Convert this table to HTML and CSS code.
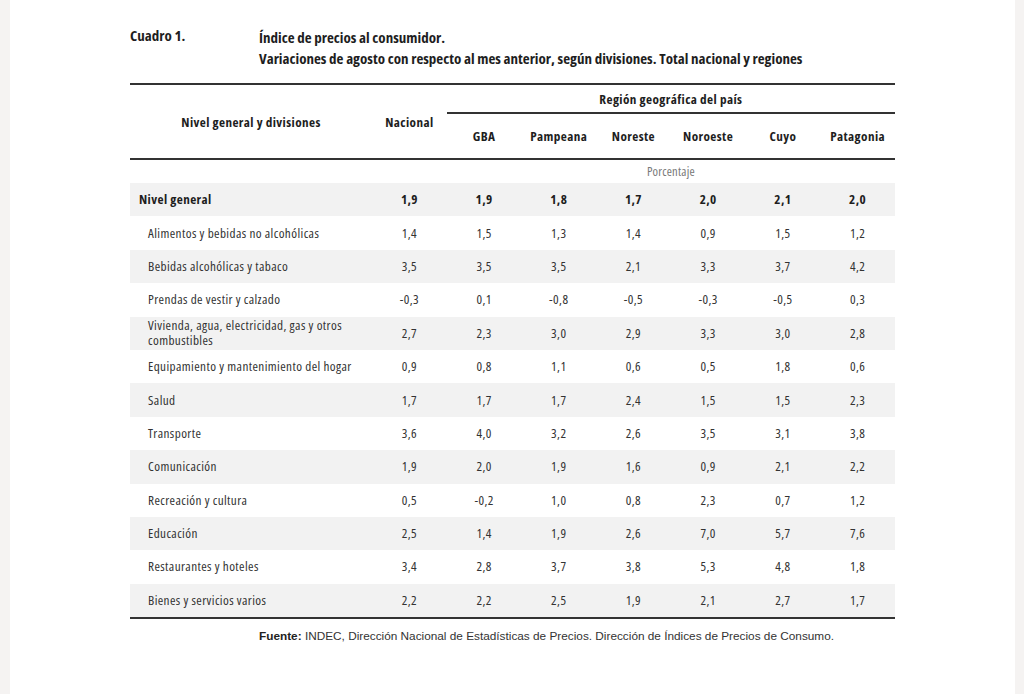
FILE: index.html
```html
<!DOCTYPE html>
<html lang="es">
<head>
<meta charset="utf-8">
<title>Cuadro 1</title>
<link rel="stylesheet" href="styles.css">
</head>
<body>
<div class="page">
  <div class="title">
    <div class="label">Cuadro 1.</div>
    <div class="heading">
      <div>Índice de precios al consumidor.</div>
      <div>Variaciones de agosto con respecto al mes anterior, según divisiones. Total nacional y regiones</div>
    </div>
  </div>
  <table class="data">
    <colgroup>
      <col class="c-name">
      <col class="c-num"><col class="c-num"><col class="c-num"><col class="c-num"><col class="c-num"><col class="c-num"><col class="c-num">
    </colgroup>
    <thead>
      <tr class="h1">
        <th rowspan="2" class="h-name">Nivel general y divisiones</th>
        <th rowspan="2" class="h-nac">Nacional</th>
        <th colspan="6" class="h-region">Región geográfica del país</th>
      </tr>
      <tr class="h2">
        <th>GBA</th><th>Pampeana</th><th>Noreste</th><th>Noroeste</th><th>Cuyo</th><th>Patagonia</th>
      </tr>
    </thead>
    <tbody>
      <tr class="unit"><td></td><td></td><td colspan="6" class="pct">Porcentaje</td></tr>
      <tr class="row shade total"><td class="name">Nivel general</td><td>1,9</td><td>1,9</td><td>1,8</td><td>1,7</td><td>2,0</td><td>2,1</td><td>2,0</td></tr>
      <tr class="row"><td class="name sub">Alimentos y bebidas no alcohólicas</td><td>1,4</td><td>1,5</td><td>1,3</td><td>1,4</td><td>0,9</td><td>1,5</td><td>1,2</td></tr>
      <tr class="row shade"><td class="name sub">Bebidas alcohólicas y tabaco</td><td>3,5</td><td>3,5</td><td>3,5</td><td>2,1</td><td>3,3</td><td>3,7</td><td>4,2</td></tr>
      <tr class="row"><td class="name sub">Prendas de vestir y calzado</td><td>-0,3</td><td>0,1</td><td>-0,8</td><td>-0,5</td><td>-0,3</td><td>-0,5</td><td>0,3</td></tr>
      <tr class="row shade"><td class="name sub">Vivienda, agua, electricidad, gas y otros combustibles</td><td>2,7</td><td>2,3</td><td>3,0</td><td>2,9</td><td>3,3</td><td>3,0</td><td>2,8</td></tr>
      <tr class="row"><td class="name sub">Equipamiento y mantenimiento del hogar</td><td>0,9</td><td>0,8</td><td>1,1</td><td>0,6</td><td>0,5</td><td>1,8</td><td>0,6</td></tr>
      <tr class="row shade"><td class="name sub">Salud</td><td>1,7</td><td>1,7</td><td>1,7</td><td>2,4</td><td>1,5</td><td>1,5</td><td>2,3</td></tr>
      <tr class="row"><td class="name sub">Transporte</td><td>3,6</td><td>4,0</td><td>3,2</td><td>2,6</td><td>3,5</td><td>3,1</td><td>3,8</td></tr>
      <tr class="row shade"><td class="name sub">Comunicación</td><td>1,9</td><td>2,0</td><td>1,9</td><td>1,6</td><td>0,9</td><td>2,1</td><td>2,2</td></tr>
      <tr class="row"><td class="name sub">Recreación y cultura</td><td>0,5</td><td>-0,2</td><td>1,0</td><td>0,8</td><td>2,3</td><td>0,7</td><td>1,2</td></tr>
      <tr class="row shade"><td class="name sub">Educación</td><td>2,5</td><td>1,4</td><td>1,9</td><td>2,6</td><td>7,0</td><td>5,7</td><td>7,6</td></tr>
      <tr class="row"><td class="name sub">Restaurantes y hoteles</td><td>3,4</td><td>2,8</td><td>3,7</td><td>3,8</td><td>5,3</td><td>4,8</td><td>1,8</td></tr>
      <tr class="row shade last"><td class="name sub">Bienes y servicios varios</td><td>2,2</td><td>2,2</td><td>2,5</td><td>1,9</td><td>2,1</td><td>2,7</td><td>1,7</td></tr>
    </tbody>
  </table>
  <p class="source"><strong>Fuente:</strong> INDEC, Dirección Nacional de Estadísticas de Precios. Dirección de Índices de Precios de Consumo.</p>
</div>
</body>
</html>
```

FILE: styles.css
```css
html, body {
  margin: 0;
  padding: 0;
}
body {
  background: #f5f3f2;
  width: 1024px;
  height: 694px;
  overflow: hidden;
  font-family: "Open Sans", "Liberation Sans", sans-serif;
  font-stretch: 75%;
  color: #2b2b2b;
}
.page {
  margin: 0 9px 0 10px;
  height: 694px;
  background: #ffffff;
  padding: 27px 0 0 120px;
  box-sizing: border-box;
}
.title {
  display: flex;
  font-weight: bold;
  font-size: 15px;
  color: #1e1e1e;
  line-height: 20.5px;
}
.title .label {
  width: 129px;
  margin-top: -2px;
}
.heading {
  display: flex;
  flex-direction: column;
}
.data {
  margin-top: 15px;
  width: 765px;
  border-collapse: collapse;
  font-size: 13.2px;
  letter-spacing: 0.4px;
  table-layout: fixed;
}
.c-name { width: 242px; }
.c-num { width: 74.7px; }
.data th {
  font-weight: bold;
  color: #1e1e1e;
  text-align: center;
  padding: 0;
}
.h1 th {
  border-top: 2px solid #333;
  height: 27px;
}
.h-name, .h-nac {
  border-bottom: 2px solid #333;
}
.h-name { padding-right: 4px; }
.h-region {
  border-bottom: 2px solid #333;
}
.h2 th {
  height: 44px;
  border-bottom: 2px solid #333;
}
.unit td {
  height: 23px;
  padding: 0;
}
.pct {
  text-align: center;
  color: #777;
  font-size: 12.5px;
  letter-spacing: 0.2px;
}
.row td {
  height: 33.4px;
  padding: 0;
  text-align: center;
  color: #333;
  line-height: 15px;
}
.row td.name {
  text-align: left;
  padding-left: 9px;
}
.row td.sub {
  padding-left: 18px;
}
.shade td {
  background: #f2f2f2;
}
.total td {
  font-weight: bold;
  color: #1e1e1e;
}
.last td {
  border-bottom: 2px solid #333;
}
.source {
  margin: 10px 0 0 129px;
  font-family: "Liberation Sans", Arial, sans-serif;
  font-stretch: normal;
  letter-spacing: 0;
  font-size: 11.8px;
  color: #333;
}
.source strong {
  color: #222;
}
```
